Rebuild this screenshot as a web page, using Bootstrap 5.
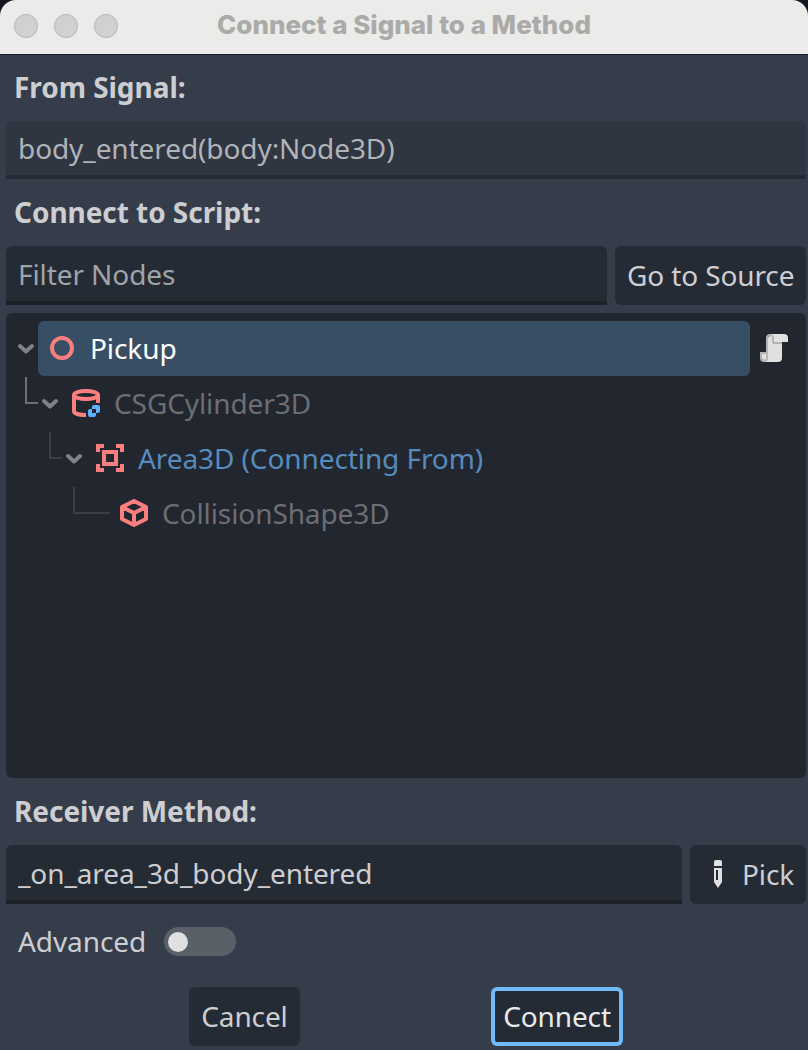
<!DOCTYPE html>
<html lang="en">
<head>
<meta charset="utf-8">
<title>Connect a Signal to a Method</title>
<link href="https://cdn.jsdelivr.net/npm/bootstrap@5.3.0/dist/css/bootstrap.min.css" rel="stylesheet">
<style>
body{background:#15171f;font-family:"Noto Sans",sans-serif;font-size:28px;line-height:38px;color:#cdced2;overflow:hidden;letter-spacing:-.09px}
.dialog{height:1050px;background:#363d4a;border-radius:16px 16px 0 0}
.titlebar{height:55px;background:#ebebe9;border-bottom:1px solid #161a28;border-radius:16px 16px 0 0;padding-left:14px;gap:16px}
.dot{width:24px;height:24px;border-radius:50%;background:#d1d1cf;border:1px solid #b4b4b2;margin-top:-2px}
.caption{font-family:Inter,sans-serif;font-weight:800;font-size:26px;letter-spacing:0;color:#aaaaa8;left:0;right:0;top:6px;white-space:nowrap}
.main{padding:0 2px 0 6px}
.heading{font-weight:700;height:67px;padding:14px 8px 0;white-space:nowrap;letter-spacing:-.05px}
.field{height:59px;border-radius:6px 6px 0 0;background:#252b34;border:0;border-bottom:4px solid #1e2228;padding:1px 12px 0;color:#cdced2;font-size:28px;line-height:38px;min-width:0;letter-spacing:-.09px}
.field::placeholder{color:#a0a3a7;opacity:1}
.field:read-only{background:#2f3541;border-bottom-color:#252b34;color:#b0b3b8;padding:0 12px 1px}
.tool{height:59px;border-radius:6px;background:#252b34;border:0;color:#cdced2;font-size:28px;line-height:38px;padding:0 12px 1px;white-space:nowrap;letter-spacing:-.12px}
.tree{height:465px;margin-top:8px;background:#22262e;border-radius:6px;padding:8px 0 0 12px}
.item{height:55px;color:#6c6e73;white-space:nowrap}
.picked{width:712px;height:55px;background:#384e65;border-radius:6px;color:#fff;padding-left:8px;margin-left:4px}
.ico{width:32px;height:32px;flex:none;display:block;margin-top:-1px}
.chev{width:16px;height:12px;flex:none;display:block}
.branch{height:27px;margin-top:1px;width:13px;border:solid #3b3e46;border-width:0 0 2px 2px;flex:none}
.name{margin-left:12px;margin-top:-2px}
.track{width:72px;height:29px;border-radius:15px;background:#596068;padding-left:4px;margin-left:18px}
.knob{width:20px;height:20px;border-radius:50%;background:#e0e0e0}
</style>
</head>
<body>
<div class="dialog d-flex flex-column">
  <header class="titlebar d-flex align-items-center position-relative flex-shrink-0">
    <span class="dot"></span><span class="dot"></span><span class="dot"></span>
    <div class="caption position-absolute text-center">Connect a Signal to a Method</div>
  </header>
  <main class="main d-flex flex-column">
    <div class="heading" style="height:66px;padding-top:13px">From Signal:</div>
    <input class="field w-100" style="height:58px" readonly value="body_entered(body:Node3D)">
    <div class="heading">Connect to Script:</div>
    <div class="d-flex gap-2">
      <input class="field flex-grow-1" placeholder="Filter Nodes">
      <button class="tool" style="width:191px">Go to Source</button>
    </div>
    <div class="tree">
      <div class="item d-flex align-items-center">
        <svg class="chev" viewBox="0 0 16 12"><path d="M2 3l6 5.5L14 3" fill="none" stroke="#808287" stroke-width="4" stroke-linecap="round" stroke-linejoin="round"/></svg>
        <div class="picked d-flex align-items-center">
          <svg class="ico" viewBox="0 0 16 16"><circle cx="8" cy="8" r="5" fill="none" stroke="#fc7f7f" stroke-width="2"/></svg>
          <span class="name">Pickup</span>
        </div>
        <svg class="ico ms-2" viewBox="0 0 16 16"><path d="M6 1v1a1 1 0 0 0-1 1v10H4v-2H2v2a1 1 0 0 0 1 1v1h7a2 2 0 0 0 2-2V5h3V3a2 2 0 0 0-2-2z" fill="#e0e0e0"/><path fill-rule="evenodd" d="M6 1a2 2 0 0 0-2 2v7H1v3a2 2 0 0 0 4 0V3a1 1 0 0 1 2 0v2a1 1 0 0 0 1 1h4V5H8V3a2 2 0 0 0-2-2zM2 11h2v2a1 1 0 0 1-2 0z" fill="#b4b4b4"/></svg>
      </div>
      <div class="item d-flex align-items-center">
        <span class="branch align-self-start" style="margin-left:7px;border-color:#6d7076"></span>
        <svg class="chev" style="margin-left:4px" viewBox="0 0 16 12"><path d="M2 3l6 5.5L14 3" fill="none" stroke="#808287" stroke-width="4" stroke-linecap="round" stroke-linejoin="round"/></svg>
        <svg class="ico" style="margin-left:12px" viewBox="0 0 16 16"><g fill="none" stroke="#fc7f7f" stroke-width="2"><ellipse cx="8" cy="4" rx="6" ry="2"/><path d="M2 4v8c0 1.2 2.6 2 6 2M14 4v4"/></g><path d="M12 9a1 1 0 0 0-1 1v1h2v2h1a1 1 0 0 0 1-1v-2a1 1 0 0 0-1-1zM13 13h-2v-2h-1a1 1 0 0 0-1 1v2a1 1 0 0 0 1 1h2a1 1 0 0 0 1-1z" fill="#5fb2ff"/></svg>
        <span class="name">CSGCylinder3D</span>
      </div>
      <div class="item d-flex align-items-center">
        <span class="branch align-self-start" style="margin-left:31px"></span>
        <svg class="chev" style="margin-left:4px" viewBox="0 0 16 12"><path d="M2 3l6 5.5L14 3" fill="none" stroke="#808287" stroke-width="4" stroke-linecap="round" stroke-linejoin="round"/></svg>
        <svg class="ico" style="margin-left:12px" viewBox="0 0 16 16"><path d="M1 1h4v2H3v2H1zM11 1h4v4h-2V3h-2zM1 11h2v2h2v2H1zM13 11h2v4h-4v-2h2z" fill="#fc7f7f"/><path d="M5 5h6v6H5z" fill="none" stroke="#fc7f7f" stroke-width="2"/></svg>
        <span class="name" style="color:#568bbd">Area3D (Connecting From)</span>
      </div>
      <div class="item d-flex align-items-center">
        <span class="branch align-self-start" style="margin-left:55px;width:37px"></span>
        <svg class="ico" style="margin-left:8px" viewBox="0 0 16 16"><path d="M8 2l6 3v6l-6 3-6-3V5zM2 5l6 3 6-3M8 8v6" fill="none" stroke="#fc7f7f" stroke-width="2" stroke-linejoin="round"/></svg>
        <span class="name">CollisionShape3D</span>
      </div>
    </div>
    <div class="heading">Receiver Method:</div>
    <div class="d-flex gap-2">
      <input class="field flex-grow-1" value="_on_area_3d_body_entered">
      <button class="tool d-flex align-items-center" style="width:116px">
        <svg class="ico" viewBox="0 0 16 16"><path d="M7 1h2a1 1 0 0 1 1 1v2H6V2a1 1 0 0 1 1-1z" fill="#e0e0e0"/><path fill-rule="evenodd" d="M6 5h4v7l-2 3-2-3zM7 6v5h1V6z" fill="#e0e0e0"/></svg>
        <span style="margin-left:8px">Pick</span>
      </button>
    </div>
    <div class="d-flex align-items-center" style="height:75px;padding-left:12px">
      <span style="margin-top:-2px">Advanced</span>
      <span class="track d-flex align-items-center"><span class="knob"></span></span>
    </div>
    <div class="d-flex" style="margin-top:8px;padding-left:183px">
      <button class="tool" style="width:111px">Cancel</button>
      <button class="tool" style="width:132px;margin-left:191px;box-shadow:inset 0 0 0 4px #70bafa;color:#e8e9eb;padding:0 0 1px">Connect</button>
    </div>
  </main>
</div>
<script src="https://cdn.jsdelivr.net/npm/bootstrap@5.3.0/dist/js/bootstrap.bundle.min.js"></script>
</body>
</html>
